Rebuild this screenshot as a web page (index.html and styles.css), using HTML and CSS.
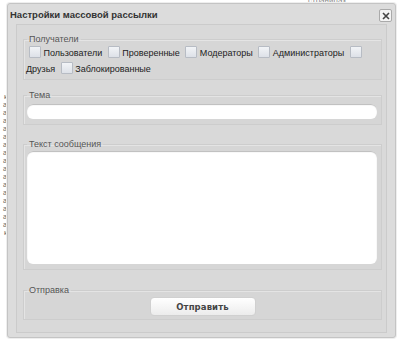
FILE: index.html
```html
<!DOCTYPE html>
<html lang="ru">
<head>
    <meta charset="UTF-8">
    <title>Настройки массовой рассылки</title>
    <link rel="stylesheet" href="styles.css">
</head>
<body>
    <div class="page">
        <div class="page-top">страницах</div>
        <div class="page-col">
            к<br>а<br>а<br>а<br>а<br>а<br>а<br>а<br>а<br>а<br>а<br>а<br>а<br>а<br>а<br>а<br>а<br>к
        </div>
    </div>

    <div class="dialog">
        <div class="dialog-header">
            <span class="dialog-title">Настройки массовой рассылки</span>
            <span class="dialog-close">
                <svg width="8" height="8" viewBox="0 0 8 8"><path d="M1 1L7 7M7 1L1 7" stroke="#444" stroke-width="1.6"/></svg>
            </span>
        </div>
        <div class="dialog-body">
            <fieldset class="group group-recipients">
                <legend>Получатели</legend>
                <div class="recipients">
                    <span class="cb"></span> Пользователи
                    <span class="cb"></span> Проверенные
                    <span class="cb"></span> Модераторы
                    <span class="cb"></span> Администраторы
                    <span class="cb"></span> Друзья
                    <span class="cb"></span> Заблокированные
                </div>
            </fieldset>

            <fieldset class="group group-subject">
                <legend>Тема</legend>
                <input type="text" class="field">
            </fieldset>

            <fieldset class="group group-text">
                <legend>Текст сообщения</legend>
                <textarea class="field area"></textarea>
            </fieldset>

            <fieldset class="group group-send">
                <legend>Отправка</legend>
                <div class="send-row">
                    <button type="button" class="btn">Отправить</button>
                </div>
            </fieldset>
        </div>
    </div>
</body>
</html>
```

FILE: styles.css
```css
body {
    margin: 0;
    background-color: #fff;
    font-family: "Liberation Sans", Arial, sans-serif;
    font-size: 9px;
    color: #222;
}
.page {
    height: 341px;
    overflow: hidden;
}
.page-top {
    padding-left: 308px;
    margin-top: -3px;
    font-size: 8px;
    line-height: 8px;
    color: #888;
}
.page-col {
    width: 7px;
    margin-top: 88px;
    font-size: 7px;
    line-height: 8px;
    color: #666;
    text-align: right;
}
.dialog {
    position: absolute;
    left: 7px;
    top: 3px;
    width: 387px;
    height: 333px;
    background-color: #dcdcdc;
    border: 1px solid #c4c4c4;
    border-radius: 3px;
    box-shadow: 0 0 0 1px #eee;
}
.dialog-header {
    height: 20px;
    display: flex;
    align-items: center;
    justify-content: space-between;
    padding: 0 3px 0 2px;
}
.dialog-title {
    font-weight: bold;
    font-size: 9.5px;
    color: #333;
}
.dialog-close {
    width: 11px;
    height: 11px;
    display: flex;
    align-items: center;
    justify-content: center;
    border: 1px solid #aaa;
    border-radius: 2px;
    background-color: #f4f4f4;
    margin-top: 3px;
}
.dialog-body {
    margin: 0 8px;
    height: 298px;
    border: 1px solid #cbcbcb;
    background-color: #d9d9d9;
    padding: 9px 4px 0 6px;
}
.group {
    margin: 0;
    padding: 0 2px 2px 2px;
    border: 1px solid #cdcdcd;
    box-shadow: inset 1px 1px 0 #e4e4e4;
    background-color: #d6d6d6;
}
.group legend {
    padding: 0 2px;
    margin-left: 1px;
    font-size: 9px;
    color: #555;
}
.group-recipients {
    margin-bottom: 10px;
}
.group-subject {
    margin-bottom: 14px;
}
.group-text {
    margin-bottom: 15px;
}
.recipients {
    line-height: 16px;
    padding-top: 1px;
}
.cb {
    display: inline-block;
    width: 10px;
    height: 10px;
    vertical-align: -2px;
    border: 1px solid #b7bcc4;
    border-radius: 1px;
    background: linear-gradient(#f2f4f7, #dde1e8);
    margin-left: 3px;
}
.field {
    display: block;
    box-sizing: border-box;
    width: 350px;
    height: 15px;
    margin: 4px 0 3px 1px;
    border: none;
    border-radius: 6px;
    background-color: #fff;
    box-shadow: inset 0 1px 1px #bbb;
}
.area {
    height: 113px;
    margin-top: 2px;
    resize: none;
}
.send-row {
    text-align: center;
}
.btn {
    width: 106px;
    height: 19px;
    margin: 2px 0 1px 0;
    border: 1px solid #d0d0d0;
    border-radius: 4px;
    background: linear-gradient(#fff, #ececec);
    font-family: "DejaVu Sans", sans-serif;
    font-weight: bold;
    font-size: 8.5px;
    letter-spacing: 0.1px;
    color: #444;
    cursor: pointer;
}
```
